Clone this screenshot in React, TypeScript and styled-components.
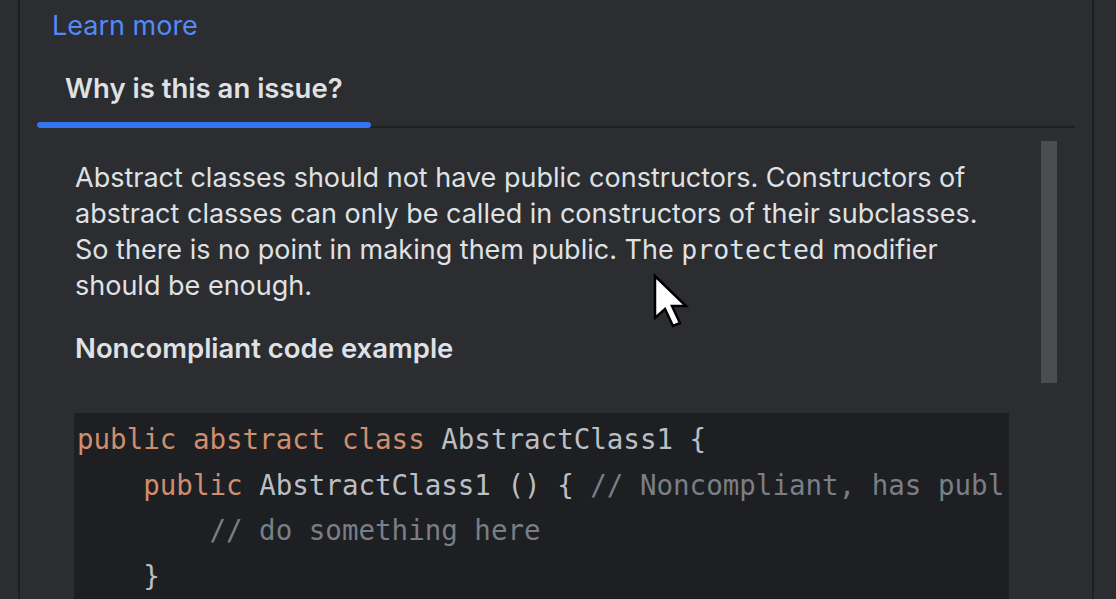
import React from "react";
import styled, { createGlobalStyle } from "styled-components";

const Global = createGlobalStyle`
  html, body { margin: 0; padding: 0; background: #2b2d30; }
  body { font-family: Inter, "Noto Sans", sans-serif; -webkit-font-smoothing: antialiased; }
`;

const Page = styled.div`
  position: relative;
  width: 1116px;
  height: 599px;
  overflow: hidden;
  background: #2b2d30;
  display: flex;
`;

const Gutter = styled.div<{ $w: number }>`
  width: ${(p) => p.$w}px;
  flex-shrink: 0;
`;

const Panel = styled.div`
  flex: 1;
  border-left: 2px solid #1e1f22;
  border-right: 2px solid #1e1f22;
  padding-top: 8px;
  display: flex;
  flex-direction: column;
`;

const LearnMore = styled.a`
  padding-left: 32px;
  font-size: 27px;
  line-height: 36px;
  color: #548af7;
  text-decoration: none;
`;

const TabBar = styled.div`
  margin: 26px 17px 0 17px;
  display: flex;
  border-bottom: 2px solid #1e1f22;
`;

const Tab = styled.div`
  width: 334px;
  display: flex;
  flex-direction: column;
`;

const TabLabel = styled.div`
  padding-left: 28px;
  font-size: 27.5px;
  font-weight: 600;
  line-height: 36px;
  color: #dfe1e5;
`;

const Indicator = styled.div`
  margin-top: 16px;
  margin-bottom: -2px;
  height: 6px;
  border-radius: 3px;
  background: #3574f0;
`;

const Body = styled.div`
  display: flex;
  flex: 1;
  min-height: 0;
`;

const Main = styled.div`
  width: 934px;
  padding-left: 55px;
  padding-top: 32px;
  display: flex;
  flex-direction: column;
`;

const Paragraph = styled.p`
  margin: 0;
  font-size: 27px;
  line-height: 36px;
  color: #dfe1e5;
  white-space: nowrap;
`;

const InlineCode = styled.code`
  font-family: "DejaVu Sans Mono", monospace;
  font-size: 26.5px;
`;

const Heading = styled.h3`
  margin: 26px 0 0 0;
  font-size: 27.5px;
  font-weight: 600;
  line-height: 36px;
  color: #dfe1e5;
`;

const CodeBlock = styled.pre`
  margin: 47px 0 0 -1px;
  padding: 4px 0 0 3px;
  background: #1e1f22;
  font-family: "DejaVu Sans Mono", monospace;
  font-size: 27.5px;
  line-height: 45.5px;
  color: #bcbec4;
  overflow: hidden;
  white-space: pre;
  flex: 1;
`;

const Kw = styled.span`
  color: #cf8e6d;
`;

const Comment = styled.span`
  color: #7a7e85;
`;

const ScrollArea = styled.div`
  margin-left: 32px;
  padding-top: 13px;
`;

const Thumb = styled.div`
  width: 16px;
  height: 242px;
  background: #4b4d51;
`;

const Cursor = styled.svg`
  position: absolute;
  left: 652px;
  top: 273px;
`;

export default function App() {
  return (
    <>
      <Global />
      <Page>
        <Gutter $w={18} />
        <Panel>
          <LearnMore href="#">Learn more</LearnMore>
          <TabBar>
            <Tab>
              <TabLabel>Why is this an issue?</TabLabel>
              <Indicator />
            </Tab>
          </TabBar>
          <Body>
            <Main>
              <Paragraph>
                Abstract classes should not have public constructors. Constructors of
                <br />
                abstract classes can only be called in constructors of their subclasses.
                <br />
                So there is no point in making them public. The <InlineCode>protected</InlineCode> modifier
                <br />
                should be enough.
              </Paragraph>
              <Heading>Noncompliant code example</Heading>
              <CodeBlock>
                <Kw>public abstract class</Kw> AbstractClass1 {"{"}
                {"\n"}
                {"    "}
                <Kw>public</Kw> AbstractClass1 () {"{"} <Comment>// Noncompliant, has publ</Comment>
                {"\n"}
                {"        "}
                <Comment>// do something here</Comment>
                {"\n"}
                {"    }"}
              </CodeBlock>
            </Main>
            <ScrollArea>
              <Thumb />
            </ScrollArea>
          </Body>
        </Panel>
        <Gutter $w={22} />
        <Cursor width="40" height="60" viewBox="0 0 40 60">
          <path
            d="M3 3 L3 45 L13 36 L21 53 L28 50 L20 33 L34 33 Z"
            fill="#ffffff"
            stroke="#000000"
            strokeWidth="2.5"
            strokeLinejoin="miter"
          />
        </Cursor>
      </Page>
    </>
  );
}
